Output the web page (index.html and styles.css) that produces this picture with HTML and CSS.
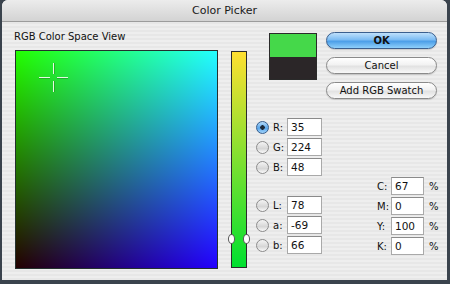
FILE: index.html
```html
<!DOCTYPE html>
<html lang="en">
<head>
    <meta charset="UTF-8">
    <title>Color Picker</title>
    <link rel="stylesheet" href="styles.css">
</head>
<body>
    <div class="screen">
        <div class="window">
            <div class="titlebar">Color Picker</div>
            <div class="content">
                <div class="field-col">
                    <div class="field-label">RGB Color Space View</div>
                    <div class="field">
                        <svg class="crosshair" width="29" height="29" viewBox="0 0 29 29">
                            <path d="M0 14.5h11M18 14.5h11M14.5 0v11M14.5 18v11" stroke="#e6fbe2" stroke-width="1" fill="none"/>
                            <path d="M0 15.5h11M18 15.5h11M15.5 0v11M15.5 18v11" stroke="rgba(40,120,40,0.5)" stroke-width="1" fill="none"/>
                        </svg>
                    </div>
                </div>

                <div class="slider">
                    <span class="handle handle-left"></span>
                    <span class="handle handle-right"></span>
                </div>

                <div class="panel">
                    <div class="top">
                        <div class="swatch">
                            <div class="swatch-new"></div>
                            <div class="swatch-old"></div>
                        </div>
                        <div class="buttons">
                            <button class="btn btn-default">OK</button>
                            <button class="btn">Cancel</button>
                            <button class="btn">Add RGB Swatch</button>
                        </div>
                    </div>

                    <div class="values">
                        <div class="group-left">
                            <div class="row"><span class="radio checked"></span><span class="lbl">R:</span><span class="box">35</span></div>
                            <div class="row"><span class="radio"></span><span class="lbl">G:</span><span class="box">224</span></div>
                            <div class="row"><span class="radio"></span><span class="lbl">B:</span><span class="box">48</span></div>
                            <div class="spacer"></div>
                            <div class="row"><span class="radio"></span><span class="lbl">L:</span><span class="box">78</span></div>
                            <div class="row"><span class="radio"></span><span class="lbl">a:</span><span class="box">-69</span></div>
                            <div class="row"><span class="radio"></span><span class="lbl">b:</span><span class="box">66</span></div>
                        </div>
                        <div class="group-right">
                            <div class="row"><span class="clbl">C:</span><span class="box box-cmyk">67</span><span class="pct">%</span></div>
                            <div class="row"><span class="clbl">M:</span><span class="box box-cmyk">0</span><span class="pct">%</span></div>
                            <div class="row"><span class="clbl">Y:</span><span class="box box-cmyk">100</span><span class="pct">%</span></div>
                            <div class="row"><span class="clbl">K:</span><span class="box box-cmyk">0</span><span class="pct">%</span></div>
                        </div>
                    </div>
                </div>
            </div>
        </div>
    </div>
</body>
</html>
```

FILE: styles.css
```css
body {
    margin: 0;
    padding: 0;
    width: 450px;
    height: 284px;
    overflow: hidden;
    font-family: "DejaVu Sans", Verdana, sans-serif;
    font-size: 10px;
    color: #111;
}

.screen {
    width: 450px;
    height: 284px;
    background-color: #3a434d;
    padding: 0 3px 4px 2px;
    box-sizing: border-box;
}

.window {
    height: 280px;
    border-radius: 6px 6px 0 0;
    overflow: hidden;
    background: repeating-linear-gradient(#eeeeee 0 2px, #e7e7e7 2px 4px);
    display: flex;
    flex-direction: column;
}

.titlebar {
    height: 21px;
    line-height: 21px;
    text-align: center;
    font-size: 11px;
    color: #1a1a1a;
    background: linear-gradient(#ececec, #d3d3d3);
    border-bottom: 1px solid #9c9c9c;
}

.content {
    flex: 1;
    display: flex;
    padding: 9px 10px 0 12px;
}

.field-col {
    width: 204px;
    display: flex;
    flex-direction: column;
}

.field-label {
    line-height: 12px;
    height: 12px;
}

.field {
    position: relative;
    margin: 7px 0 0 1px;
    width: 203px;
    height: 219px;
    box-sizing: border-box;
    border: 1px solid #24302e;
    background-color: rgb(35, 0, 0);
    background-image: linear-gradient(to top, #000, #00ff00), linear-gradient(to right, #000, #0000ff);
    background-blend-mode: lighten;
}

.crosshair {
    position: absolute;
    left: 23px;
    top: 12px;
}

.slider {
    position: relative;
    margin: 20px 0 0 13px;
    width: 16px;
    height: 217px;
    box-sizing: border-box;
    border: 1px solid #2b2b2b;
    background: linear-gradient(rgb(255, 224, 48), rgb(0, 224, 48));
}

.handle {
    position: absolute;
    top: 182px;
    width: 5px;
    height: 8px;
    border: 1px solid #555;
    border-radius: 50%;
    background: #fff;
}

.handle-left {
    left: -4px;
}

.handle-right {
    right: -4px;
}

.panel {
    margin-left: 9px;
    width: 181px;
    display: flex;
    flex-direction: column;
}

.top {
    display: flex;
    padding-top: 1px;
}

.swatch {
    margin: 1px 0 0 13px;
    width: 48px;
    height: 47px;
    box-sizing: border-box;
    border: 1px solid #2a2a2a;
    display: flex;
    flex-direction: column;
}

.swatch-new {
    flex: 1;
    background: #45d84a;
}

.swatch-old {
    flex: 1;
    background: #2b2628;
}

.buttons {
    margin-left: 9px;
    display: flex;
    flex-direction: column;
    gap: 8px;
}

.btn {
    width: 111px;
    height: 17px;
    padding: 0;
    font-family: "DejaVu Sans", Verdana, sans-serif;
    font-size: 10px;
    line-height: 15px;
    color: #111;
    border: 1px solid #8a8a8a;
    border-radius: 9px;
    background: linear-gradient(#ffffff 0%, #f2f2f2 45%, #e2e2e2 55%, #f8f8f8 100%);
    box-shadow: 0 1px 1px rgba(0, 0, 0, 0.15);
}

.btn-default {
    font-weight: bold;
    border-color: #3b5f8e;
    background: linear-gradient(#bfe0fb 0%, #7cbcf3 45%, #4c9ee8 55%, #8fd0fb 100%);
}

.values {
    margin-top: 18px;
    display: flex;
    justify-content: space-between;
}

.group-left,
.group-right {
    display: flex;
    flex-direction: column;
}

.group-right {
    padding-top: 59px;
}

.row {
    height: 20px;
    display: flex;
    align-items: center;
}

.spacer {
    height: 18px;
}

.radio {
    width: 11px;
    height: 11px;
    border: 1px solid #8c8c8c;
    border-radius: 50%;
    background: linear-gradient(#f4f4f4, #d6d6d6 60%, #fafafa);
    display: flex;
    align-items: center;
    justify-content: center;
}

.radio.checked {
    border-color: #355c8c;
    background: radial-gradient(circle, #1c2a3a 0 2px, transparent 2.5px), linear-gradient(#b6dcfa, #5aa6ea 55%, #9fd3fb);
}

.lbl {
    width: 14px;
    padding-left: 4px;
}

.box {
    width: 35px;
    height: 18px;
    box-sizing: border-box;
    padding-left: 3px;
    line-height: 17px;
    font-size: 10.5px;
    background: #fff;
    border: 1px solid #a9a9a9;
    border-top-color: #8a8a8a;
}

.box-cmyk {
    width: 33px;
}

.clbl {
    width: 14px;
}

.pct {
    width: 13px;
    padding-left: 5px;
    box-sizing: border-box;
}
```
